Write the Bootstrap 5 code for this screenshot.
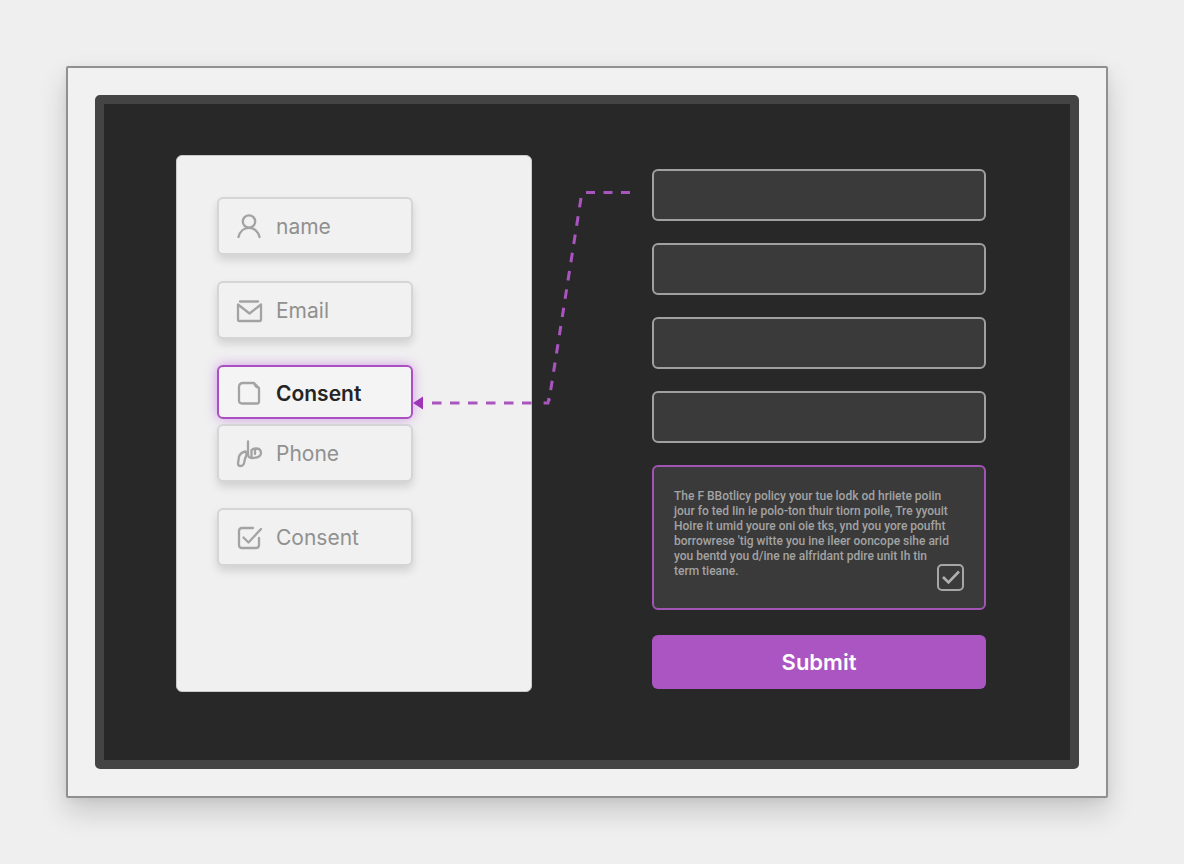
<!DOCTYPE html>
<html lang="en">
<head>
<meta charset="utf-8">
<meta name="viewport" content="width=device-width, initial-scale=1">
<title>Form field mapping</title>
<link href="https://cdn.jsdelivr.net/npm/bootstrap@5.3.0/dist/css/bootstrap.min.css" rel="stylesheet">
<style>
  body { background: #efefef; font-family: Inter, "Liberation Sans", sans-serif; }
  .page { padding: 66px 76px 64px 66px; }
  .sheet { background: #f1f1f1; border: 2px solid #8f9190; border-radius: 2px; padding: 27px; box-shadow: 0 14px 28px rgba(0,0,0,.16), 0 2px 10px rgba(0,0,0,.06); }
  .stage { background: #282828; border: 9px solid #444; border-radius: 5px; padding: 51px 84px 68px 72px; display: grid; grid-template-columns: 356fr 334fr; column-gap: 120px; }
  .source { background: #f0f0f0; border: 1px solid #c9c9c9; border-radius: 6px; padding: 41px 40px 125px; }
  .chip-box { position: relative; width: 196px; }
  .chip { width: 100%; height: 58px; padding: 2px 17px 0; background: #f1f1f1; border: 2px solid #d3d5d6; border-radius: 6px; color: #909090; font-size: 21px; line-height: 28px; box-shadow: 0 5px 9px rgba(0,0,0,.13); }
  .chip svg { width: 28px; height: 28px; flex: none; fill: none; stroke: #a3a3a3; stroke-width: 2.300; stroke-linecap: round; stroke-linejoin: round; }
  .chip.chosen { height: 54px; padding-top: 4px; border-color: #ab4fc4; background: #f4f4f4; color: #242424; font-weight: 600; box-shadow: 0 0 12px rgba(176,70,220,.5); }
  .chip-gap { gap: 12px; }
  .spaced { margin-top: 26px; }
  .spaced-sm { margin-top: 5px; }
  .link-line { position: absolute; left: 100%; bottom: 15px; width: 220px; height: 220px; overflow: visible; z-index: 2; pointer-events: none; }
  .target { padding-top: 14px; gap: 22px; }
  .field { height: 52px; padding: 0 20px; background: #3a3a3a; border: 2px solid #a0a0a0; border-radius: 6px; color: #ddd; font-size: 16px; }
  .field:focus { background: #3a3a3a; border-color: #a254b5; color: #ddd; }
  .policy { position: relative; height: 145px; background: #3a3a3a; border: 2px solid #a254b5; border-radius: 6px; padding: 22px 20px; }
  .policy label { display: block; color: #a3a3a3; font: 500 12px/15px Roboto, "Liberation Sans", sans-serif; white-space: nowrap; }
  .tick { position: absolute; right: 20px; bottom: 17px; width: 27px; height: 27px; }
  .tick input { appearance: none; display: block; width: 100%; height: 100%; margin: 0; border: 2px solid #a6a6a6; border-radius: 5px; }
  .tick svg { position: absolute; inset: 0; fill: none; stroke: #b0b0b0; stroke-width: 2.600; pointer-events: none; visibility: hidden; }
  .tick input:checked + svg { visibility: visible; }
  .send { height: 54px; margin-top: 3px; padding: 0; border: 0; border-radius: 6px; background: #aa55c2; color: #fff; font-size: 22px; line-height: 28px; font-weight: 600; }
  .send:hover { background: #9b47b4; color: #fff; }
</style>
</head>
<body>
<main class="page">
  <div class="sheet">
    <div class="stage">
      <section class="source" aria-label="Fields">
        <div class="chip-box">
          <button type="button" class="chip chip-gap d-flex align-items-center">
            <svg viewBox="0 0 28 28"><circle cx="13" cy="8.500" r="6.200"/><path d="M2.500 24c1.300-5.400 5.400-9.200 10.500-9.200S22.300 18.600 23.500 24"/></svg>
            name
          </button>
        </div>
        <div class="chip-box spaced">
          <button type="button" class="chip chip-gap d-flex align-items-center">
            <svg viewBox="0 0 28 28"><path d="M4 4.500h18M2 7.500v15.500q0 1 1 1h21q1 0 1-1V7.500L13.500 16.500z"/></svg>
            Email
          </button>
        </div>
        <div class="chip-box spaced">
          <button type="button" class="chip chosen chip-gap d-flex align-items-center">
            <svg viewBox="0 0 28 28"><path d="M7 3h11l5 5V21.500q0 2-2 2H6q-3 0-3-3V7q0-4 4-4zM18 3q1 4 5 5"/></svg>
            Consent
          </button>
          <svg class="link-line" viewBox="0 0 220 220" fill="none" stroke="#aa55bf" stroke-width="3" aria-hidden="true">
            <path d="M217 8.500h-45" stroke-dasharray="9 8.500"/>
            <path d="M168 14l-32 203" stroke-dasharray="9.500 9"/>
            <path d="M136 214l-1 5h-8M19 219h106" stroke-dasharray="9.500 8.500"/>
            <path d="M0 219l10-6.500v13z" fill="#9e35b7" stroke="none"/>
          </svg>
        </div>
        <div class="chip-box spaced-sm">
          <button type="button" class="chip chip-gap d-flex align-items-center">
            <svg viewBox="0 0 28 28"><path d="M12 1.500V14q0 4 4 4 9 0 9-5 0-4.500-5-4.500-3 0-4.500 1.500v7.500M19 9v5M9.500 11.500q-5 1-6.500 5l-1 7q0 2.500 2.500 2.500 3.500 0 4-5 .5-3 1.500-4.500 1-3-.5-5z"/></svg>
            Phone
          </button>
        </div>
        <div class="chip-box spaced">
          <button type="button" class="chip chip-gap d-flex align-items-center">
            <svg viewBox="0 0 28 28"><path d="M17 4H6Q3 4 3 7v14q0 3 3 3h14q3 0 3-3v-7M7.500 13.500l5 5L25 5"/></svg>
            Consent
          </button>
        </div>
      </section>

      <form class="target d-flex flex-column" onsubmit="return false">
        <input class="form-control field" type="text" aria-label="Name">
        <input class="form-control field" type="email" aria-label="Email">
        <input class="form-control field" type="tel" aria-label="Phone">
        <input class="form-control field" type="text" aria-label="Details">
        <div class="policy">
          <label for="agree">The F BBotlicy policy your tue lodk od hriiete poiin<br>
            jour fo ted Iin ie polo-ton thuir tiorn poile, Tre yyouit<br>
            Hoire it umid youre oni oie tks, ynd you yore poufht<br>
            borrowrese 'tig witte you ine ileer ooncope sihe arid<br>
            you bentd you d/ine ne alfridant pdire unit Ih tin<br>
            term tieane.</label>
          <div class="tick">
            <input type="checkbox" id="agree" checked>
            <svg viewBox="0 0 27 27" aria-hidden="true"><path d="M6 13l5.500 5.500L22 7.500"/></svg>
          </div>
        </div>
        <button type="submit" class="btn send">Submit</button>
      </form>
    </div>
  </div>
</main>
<script src="https://cdn.jsdelivr.net/npm/bootstrap@5.3.0/dist/js/bootstrap.bundle.min.js"></script>
</body>
</html>
